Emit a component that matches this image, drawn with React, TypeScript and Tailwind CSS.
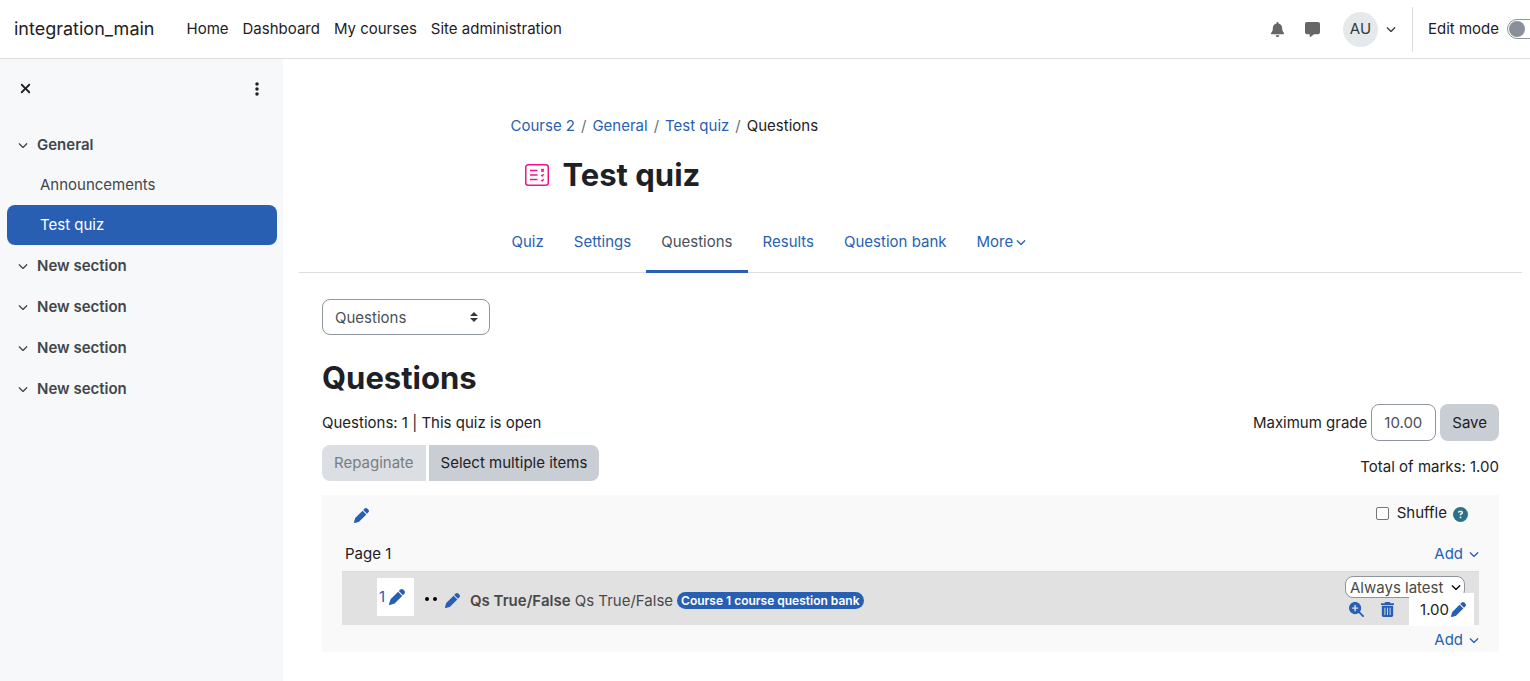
import type { ReactNode } from "react";
import {
  FaBell,
  FaChevronDown,
  FaCircleQuestion,
  FaEllipsisVertical,
  FaMagnifyingGlassPlus,
  FaMessage,
  FaPen,
  FaXmark,
} from "react-icons/fa6";

const mainNav = ["Home", "Dashboard", "My courses", "Site administration"];

const sections = [
  { name: "General", items: ["Announcements", "Test quiz"] },
  { name: "New section", items: [] },
  { name: "New section", items: [] },
  { name: "New section", items: [] },
  { name: "New section", items: [] },
];

const crumbs = ["Course 2", "General", "Test quiz"];

const tabs = ["Quiz", "Settings", "Questions", "Results", "Question bank"];

function Chevron({ className = "" }: { className?: string }) {
  return <FaChevronDown className={"size-[10px] shrink-0 " + className} />;
}

function QuizIcon() {
  return (
    <svg viewBox="0 0 24 24" className="mx-[14px] size-6 shrink-0" fill="none" stroke="#f7108b" strokeWidth="1.5">
      <rect x="0.75" y="1.75" width="22.5" height="20.5" rx="2.5" />
      <path d="M5 7.5h7.5M5 12h7.5M5 16.5h7.5" />
      <path d="M16.3 6l2.4 2.8M18.7 6l-2.4 2.8M16.3 12l.9.9 1.5-1.8M16.3 17l.9.9 1.5-1.8" strokeWidth="1.4" />
    </svg>
  );
}

function TrashIcon() {
  return (
    <svg viewBox="0 0 14 16" className="h-[15px] w-[13px]" fill="#285fb2">
      <path d="M4.5 0h5l.8 1.4H14v1.7H0V1.4h3.7z" />
      <path fillRule="evenodd" d="M.9 4h12.2v10.4c0 .9-.7 1.6-1.6 1.6h-9c-.9 0-1.6-.7-1.6-1.6zM3.7 6v7.8h1V6zm2.8 0v7.8h1V6zm2.8 0v7.8h1V6z" />
    </svg>
  );
}

function Header() {
  return (
    <header className="flex h-[59px] items-center overflow-hidden border-b border-[#dcdee0] bg-white">
      <a href="#" className="ml-[14px] shrink-0 text-lg">
        integration_main
      </a>
      <nav className="ml-8 flex shrink-0 gap-[14px]">
        {mainNav.map((label) => (
          <a key={label} href="#">
            {label}
          </a>
        ))}
      </nav>

      <div className="ml-auto flex shrink-0 items-center">
        <button aria-label="Notifications" className="text-[#666]">
          <FaBell className="size-[15px]" />
        </button>
        <button aria-label="Messages" className="ml-5 text-[#666]">
          <FaMessage className="size-[15px]" />
        </button>
        <button aria-label="User menu" className="ml-[23px] flex items-center gap-2">
          <span className="flex size-[35px] items-center justify-center rounded-full bg-[#e5e9ec] text-[#343a40]">AU</span>
          <Chevron className="text-[#343a40]" />
        </button>
      </div>
      <div className="-mr-3 ml-4 flex h-[45px] shrink-0 items-center border-l border-[#dcdee0] pl-[15px]">
        <label htmlFor="edit-mode">Edit mode</label>
        <span className="relative ml-2 flex h-5 w-[35px] items-center">
          <input
            id="edit-mode"
            type="checkbox"
            role="switch"
            className="peer h-5 w-[35px] appearance-none rounded-full border border-[#8f959e] bg-white"
          />
          <span className="pointer-events-none absolute left-[2px] size-4 rounded-full bg-[#8a8f99] peer-checked:left-[17px]" />
        </span>
      </div>
    </header>
  );
}

function Sidebar() {
  return (
    <aside className="w-[283px] shrink-0 bg-[#f7f8fa] pr-[6px] pl-[7px] text-[#41464b]">
      <div className="flex h-[59px] items-center justify-between pr-3 pl-[11px] text-[#1d2125]">
        <button aria-label="Close course index">
          <FaXmark className="size-[15px]" />
        </button>
        <button aria-label="Course index options">
          <FaEllipsisVertical className="size-4" />
        </button>
      </div>
      <nav className="pt-[6px]">
        {sections.map((s, i) => (
          <div key={i}>
            <button className="flex h-[41px] w-full items-center pl-[11px] font-semibold">
              <Chevron className="mr-[9px]" />
              {s.name}
            </button>
            {s.items.map((item) => (
              <a
                key={item}
                href="#"
                className={[
                  "flex h-10 items-center rounded-lg pl-[33px]",
                  item === "Test quiz" ? "bg-[#285fb2] text-white" : "",
                ].join(" ")}
              >
                {item}
              </a>
            ))}
          </div>
        ))}
      </nav>
    </aside>
  );
}

function PageHeader() {
  return (
    <>
      <div className="mx-auto max-w-[800px]">
        <nav aria-label="Breadcrumb" className="flex gap-[6px]">
          {crumbs.map((c) => (
            <span key={c} className="flex gap-[6px]">
              <a href="#" className="text-[#285fb2]">
                {c}
              </a>
              <span className="text-[#6a737b]">/</span>
            </span>
          ))}
          <span>Questions</span>
        </nav>
        <div className="mt-[19px] flex items-center">
          <QuizIcon />
          <h1 className="text-[31px] leading-9 font-bold">Test quiz</h1>
        </div>
      </div>
      <div className="mt-[18px] border-b border-[#dcdee0]">
        <nav className="mx-auto -mb-px flex max-w-[828px]">
          {tabs.map((t) => (
            <a
              key={t}
              href="#"
              className={[
                "flex h-[62px] items-center border-y-3 border-t-transparent px-[15px]",
                t === "Questions" ? "border-b-[#285fb2] text-[#495057]" : "border-b-transparent text-[#285fb2]",
              ].join(" ")}
            >
              {t}
            </a>
          ))}
          <button className="flex h-[62px] items-center gap-[3px] px-[15px] text-[#285fb2]">
            More
            <Chevron />
          </button>
        </nav>
      </div>
    </>
  );
}

function AddButton() {
  return (
    <button className="flex items-center gap-[6px] text-[#285fb2]">
      Add
      <Chevron />
    </button>
  );
}

function IconLink({ label, children }: { label: string; children: ReactNode }) {
  return (
    <a href="#" aria-label={label} className="text-[#285fb2]">
      {children}
    </a>
  );
}

function Slot() {
  return (
    <div className="flex h-[54px] justify-between border-t border-[#dadada] bg-[#e1e1e1]">
      <div className="flex items-center pl-[35px] text-[#494949]">
        <a href="#" className="mb-1 flex h-[38px] w-[37px] items-center gap-1 bg-white pl-[2px] text-[#285fb2]">
          1
          <FaPen className="size-4" />
        </a>
        <span className="ml-[11px] flex gap-1">
          <i className="size-1 rounded-full bg-black" />
          <i className="size-1 rounded-full bg-black" />
        </span>
        <div className="ml-2 flex items-center pt-1">
          <IconLink label="Edit question">
            <FaPen className="size-[15px]" />
          </IconLink>
          <a href="#" className="ml-[10px]">
            <b className="font-semibold">Qs True/False</b> Qs True/False
          </a>
          <a href="#" className="ml-1 rounded-full bg-[#285fb2] px-1 text-xs leading-[17px] font-semibold text-white">
            Course 1 course question bank
          </a>
        </div>
      </div>

      <div className="mr-[5px] flex flex-col items-end pt-1">
        <div className="relative mr-[9px]">
          <select
            aria-label="Question version"
            className="block h-[22px] w-[120px] appearance-none rounded-lg border border-[#8f959e] bg-white pt-px pl-1 leading-5 text-[#494949]"
          >
            <option>Always latest</option>
          </select>
          <Chevron className="pointer-events-none absolute top-[6px] right-1 text-black" />
        </div>
        <div className="relative -mt-[5px] flex h-[33px] items-center">
          <IconLink label="Preview question">
            <FaMagnifyingGlassPlus className="size-[15px]" />
          </IconLink>
          <span className="ml-[17px] flex">
            <IconLink label="Delete">
              <TrashIcon />
            </IconLink>
          </span>
          <a href="#" className="ml-[15px] flex h-[33px] w-[65px] items-center justify-end gap-[2px] bg-white pr-2">
            1.00
            <FaPen className="size-[15px] text-[#285fb2]" />
          </a>
        </div>
      </div>
    </div>
  );
}

export default function App() {
  return (
    <div className="flex min-h-screen flex-col bg-white font-['Inter','Liberation_Sans',sans-serif] text-[15px] leading-6 text-[#1d2125]">
      <Header />
      <div className="flex grow">
        <Sidebar />
        <main className="min-w-0 grow pt-[55px] pr-2 pl-4">
          <PageHeader />

          <div className="px-[23px] pt-[26px]">
            <div className="relative w-[168px]">
              <select
                aria-label="Quiz navigation"
                className="block h-9 w-full appearance-none rounded-lg border border-[#8f959e] bg-white px-3 pt-px text-[#495057]"
              >
                <option>Questions</option>
              </select>
              <svg viewBox="0 0 8 10" className="pointer-events-none absolute top-[13px] right-3 h-[10px] w-2" fill="#343a40">
                <path d="M4 0l4 4H0zM4 10l4-4H0z" />
              </svg>
            </div>

            <h2 className="mt-[25px] text-[31px] leading-9 font-bold">Questions</h2>

            <div className="mt-2 flex justify-between">
              <div>
                <p className="mt-[7px]">Questions: 1 | This quiz is open</p>
                <div className="mt-[10px] flex gap-[3px]">
                  <button disabled className="h-9 rounded-l-lg bg-[#dbdfe3] px-3 text-[#797d81]">
                    Repaginate
                  </button>
                  <button className="h-9 rounded-r-lg bg-[#c9cdd4] px-3">Select multiple items</button>
                </div>
              </div>
              <div className="text-right">
                <form className="flex items-center gap-1">
                  <label htmlFor="max-grade">Maximum grade</label>
                  <input
                    id="max-grade"
                    type="text"
                    defaultValue="10.00"
                    className="h-[37px] w-[65px] rounded-lg border border-[#8f959e] px-3 text-[#495057]"
                  />
                  <button type="button" className="h-[37px] rounded-lg bg-[#c9cdd4] px-3">
                    Save
                  </button>
                </form>
                <p className="mt-[14px]">Total of marks: 1.00</p>
              </div>
            </div>

            <div className="mt-[14px] bg-[#f9f9f9] px-5">
              <div className="flex items-center justify-between pt-[6px] pr-[11px] pl-3">
                <IconLink label="Edit section heading">
                  <FaPen className="mt-1 size-[15px]" />
                </IconLink>
                <div className="flex items-center">
                  <input
                    id="shuffle"
                    type="checkbox"
                    className="size-[13px] appearance-none rounded-[2px] border border-[#767676] bg-white checked:bg-[#285fb2]"
                  />
                  <label htmlFor="shuffle" className="ml-2">
                    Shuffle
                  </label>
                  <button aria-label="Help with Shuffle" className="ml-[6px] text-[#2c7287]">
                    <FaCircleQuestion className="mt-[2px] size-[15px]" />
                  </button>
                </div>
              </div>
              <div className="mt-[17px] mb-[5px] flex justify-between pl-[3px]">
                <h3>Page 1</h3>
                <AddButton />
              </div>
              <Slot />
              <div className="flex justify-end pt-[3px]">
                <AddButton />
              </div>
            </div>
          </div>
        </main>
      </div>
    </div>
  );
}
